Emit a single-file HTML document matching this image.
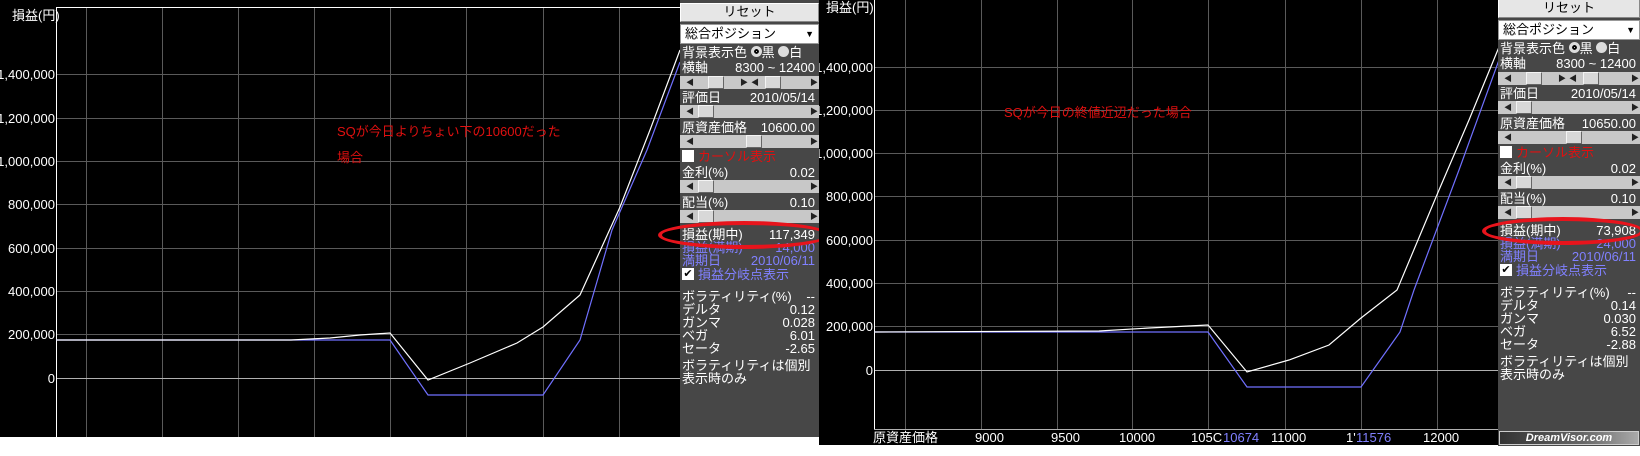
<!DOCTYPE html>
<html><head><meta charset="utf-8">
<style>
*{margin:0;padding:0;box-sizing:border-box}
body{width:1640px;height:456px;background:#fff;position:relative;overflow:hidden;font-family:"Liberation Sans","Noto Sans CJK JP",sans-serif;font-size:13px;color:#fff}
.abs{position:absolute;white-space:nowrap;line-height:13px}
.panel{position:absolute;background:#474747}
.btn{position:absolute;background:#e6e6e6;border:1px solid #fff;border-right-color:#888;border-bottom-color:#888;color:#000;text-align:center;font-size:13px;line-height:16px}
.dd{position:absolute;background:#fff;color:#000;font-size:13px;line-height:18px;padding-left:4px;border:1px solid #999}
.sb{position:absolute;height:13px;background:#c8c8c8}
.th{position:absolute;top:0;width:16px;height:13px;background:#d8d8d8;border:1px solid #f4f4f4;border-right-color:#666;border-bottom-color:#666}
.ar{position:absolute;top:2px;font-size:8px;color:#222;line-height:9px}
.row{position:absolute;left:2px;right:4px;height:13px;line-height:13px}
.row span.r{position:absolute;right:0}
.blue{color:#8080ff}
</style></head><body>

<!-- LEFT CHART -->
<svg class="abs" style="left:0;top:0" width="680" height="437">
<rect width="680" height="437" fill="#000"/>
<g stroke="#5a5a5a" stroke-width="1">
<line x1="86.5" y1="7" x2="86.5" y2="437"/><line x1="162.5" y1="7" x2="162.5" y2="437"/><line x1="238.5" y1="7" x2="238.5" y2="437"/><line x1="314.5" y1="7" x2="314.5" y2="437"/><line x1="390.5" y1="7" x2="390.5" y2="437"/><line x1="466.5" y1="7" x2="466.5" y2="437"/><line x1="543.5" y1="7" x2="543.5" y2="437"/><line x1="619.5" y1="7" x2="619.5" y2="437"/>
<line x1="56" y1="74.5" x2="680" y2="74.5"/><line x1="56" y1="118.5" x2="680" y2="118.5"/><line x1="56" y1="161.5" x2="680" y2="161.5"/><line x1="56" y1="204.5" x2="680" y2="204.5"/><line x1="56" y1="248.5" x2="680" y2="248.5"/><line x1="56" y1="291.5" x2="680" y2="291.5"/><line x1="56" y1="334.5" x2="680" y2="334.5"/>
</g>
<line x1="56" y1="378.5" x2="680" y2="378.5" stroke="#b0b0b0"/>
<line x1="56.5" y1="7" x2="56.5" y2="437" stroke="#fff"/>
<line x1="56" y1="7.5" x2="680" y2="7.5" stroke="#fff"/>
<polyline fill="none" stroke="#7070ff" stroke-width="1.2" points="56,340 390,340 428,395 543,395 580,340 612,230 647,150 680,62"/>
<polyline fill="none" stroke="#fff" stroke-width="1.2" points="56,340 291,340 330,338 360,335 390,333 428,380 470,363 517,343 543,327 580,295 620,207 650,130 680,50"/>
<g fill="#fff" font-size="13" font-family="Liberation Sans, Noto Sans CJK JP, sans-serif" text-anchor="end">
<text x="55" y="79">1,400,000</text><text x="55" y="123">1,200,000</text><text x="55" y="166">1,000,000</text><text x="55" y="209">800,000</text><text x="55" y="253">600,000</text><text x="55" y="296">400,000</text><text x="55" y="339">200,000</text><text x="55" y="383">0</text>
</g>
<text x="12" y="20" fill="#fff" font-size="13" font-family="Liberation Sans, Noto Sans CJK JP, sans-serif">損益(円)</text>
<g fill="#e01010" font-size="13" font-family="Liberation Sans, Noto Sans CJK JP, sans-serif">
<text x="337" y="136">SQが今日よりちょい下の10600だった</text><text x="337" y="162">場合</text>
</g>
</svg>

<!-- LEFT PANEL -->
<div class="panel" id="p1" style="left:680px;top:0;width:139px;height:437px"></div>

<!-- RIGHT CHART -->
<svg class="abs" style="left:819px;top:0" width="680" height="445">
<rect width="680" height="445" fill="#000"/>
<g stroke="#5a5a5a">
<line x1="86.5" y1="0" x2="86.5" y2="429"/><line x1="162.5" y1="0" x2="162.5" y2="429"/><line x1="238.5" y1="0" x2="238.5" y2="429"/><line x1="313.5" y1="0" x2="313.5" y2="429"/><line x1="389.5" y1="0" x2="389.5" y2="429"/><line x1="466.5" y1="0" x2="466.5" y2="429"/><line x1="542.5" y1="0" x2="542.5" y2="429"/><line x1="618.5" y1="0" x2="618.5" y2="429"/>
<line x1="55" y1="67.5" x2="680" y2="67.5"/><line x1="55" y1="110.5" x2="680" y2="110.5"/><line x1="55" y1="153.5" x2="680" y2="153.5"/><line x1="55" y1="196.5" x2="680" y2="196.5"/><line x1="55" y1="240.5" x2="680" y2="240.5"/><line x1="55" y1="283.5" x2="680" y2="283.5"/><line x1="55" y1="326.5" x2="680" y2="326.5"/>
</g>
<line x1="55" y1="370.5" x2="680" y2="370.5" stroke="#b0b0b0"/>
<line x1="55.5" y1="0" x2="55.5" y2="429" stroke="#fff"/>
<line x1="55" y1="429.5" x2="680" y2="429.5" stroke="#b0b0b0"/>
<polyline fill="none" stroke="#7070ff" stroke-width="1.2" points="55,332 389,332 428,387 542,387 581,332 595,290 640,170 680,60"/>
<polyline fill="none" stroke="#fff" stroke-width="1.2" points="55,332 280,331 330,328 389,325 428,372 470,360 510,345 542,318 578,290 620,190 650,120 680,47"/>
<g fill="#fff" font-size="13" font-family="Liberation Sans, Noto Sans CJK JP, sans-serif" text-anchor="end">
<text x="54" y="72">1,400,000</text><text x="54" y="115">1,200,000</text><text x="54" y="158">1,000,000</text><text x="54" y="201">800,000</text><text x="54" y="245">600,000</text><text x="54" y="288">400,000</text><text x="54" y="331">200,000</text><text x="54" y="375">0</text>
</g>
<text x="-6" y="12" fill="#fff" font-size="13" font-family="Liberation Sans, Noto Sans CJK JP, sans-serif">　損益(円)</text>
<text x="185" y="117" fill="#e01010" font-size="13" font-family="Liberation Sans, Noto Sans CJK JP, sans-serif">SQが今日の終値近辺だった場合</text>
<g fill="#fff" font-size="13" font-family="Liberation Sans, Noto Sans CJK JP, sans-serif">
<text x="54" y="442">原資産価格</text><text x="156" y="442">9000</text><text x="232" y="442">9500</text><text x="300" y="442">10000</text><text x="372" y="442">105C</text><text x="404" y="442" fill="#8080ff">10674</text><text x="452" y="442">11000</text><text x="527" y="442">1'</text><text x="537" y="442" fill="#8080ff">11576</text><text x="604" y="442">12000</text>
</g>
</svg>

<!-- RIGHT PANEL -->
<div class="panel" id="p2" style="left:1498px;top:0;width:142px;height:446px"></div>

<script>
function sb(top,w,thumbs,arrows){
  var h='<div class="sb" style="left:0;top:'+top+'px;width:'+w+'px">';
  thumbs.forEach(function(t){h+='<div class="th" style="left:'+t+'px"></div>'});
  arrows.forEach(function(a){h+='<div class="ar" style="left:'+a[0]+'px">'+a[1]+'</div>'});
  return h+'</div>';
}
function build(id,o,d){
  var w=d.w,h='';
  h+='<div class="btn" style="left:0;top:'+(o+3)+'px;width:'+w+'px;height:19px">リセット</div>';
  h+='<div class="dd" style="left:0;top:'+(o+24)+'px;width:'+w+'px;height:20px">総合ポジション<span style="position:absolute;right:4px;font-size:9px">▼</span></div>';
  var R=function(t,l,r,c){h+='<div class="row'+(c?' '+c:'')+'" style="top:'+(o+t)+'px">'+l+'<span class="r">'+r+'</span></div>'};
  R(46,'背景表示色 <span style="display:inline-block;width:11px;height:11px;border-radius:50%;background:#fff;border:3px solid #ddd;box-shadow:inset 0 0 0 2px #000"></span>黒 <span style="display:inline-block;width:11px;height:11px;border-radius:50%;background:#ddd"></span>白','');
  R(61,'横軸','8300 ~ 12400');
  h+=sb(o+76,w,[28,85],[[6,'◀'],[60,'▶'],[71,'◀'],[w-9,'▶']]);
  R(91,'評価日','2010/05/14');
  h+=sb(o+105,w,[18],[[6,'◀'],[w-9,'▶']]);
  R(121,'原資産価格',d.price);
  h+=sb(o+135,w,[d.pt],[[6,'◀'],[w-9,'▶']]);
  h+='<div style="position:absolute;left:2px;top:'+(o+150)+'px;width:12px;height:12px;background:#fff"></div><div class="row" style="top:'+(o+150)+'px;left:18px;color:#e01010">カーソル表示</div>';
  R(166,'金利(%)','0.02');
  h+=sb(o+180,w,[18],[[6,'◀'],[w-9,'▶']]);
  R(196,'配当(%)','0.10');
  h+=sb(o+210,w,[18],[[6,'◀'],[w-9,'▶']]);
  R(228,'損益(期中)',d.pl);
  R(241,'損益(満期)',d.mat,'blue');
  R(254,'満期日','2010/06/11','blue');
  h+='<div style="position:absolute;left:2px;top:'+(o+268)+'px;width:12px;height:12px;background:#fff;color:#000;font-size:11px;line-height:12px;text-align:center">✔</div><div class="row blue" style="top:'+(o+268)+'px;left:18px">損益分岐点表示</div>';
  R(290,'ボラティリティ(%)','--');
  R(303,'デルタ',d.dl);R(316,'ガンマ',d.gm);R(329,'ベガ',d.vg);R(342,'セータ',d.th);
  h+='<div class="row" style="top:'+(o+359)+'px;overflow:hidden;right:0">ボラティリティは個別銘柄</div>';
  h+='<div class="row" style="top:'+(o+372)+'px">表示時のみ</div>';
  if(d.logo) h+='<div style="position:absolute;left:1px;top:431px;width:'+(w-2)+'px;height:14px;background:linear-gradient(90deg,#333,#666 60%,#aaa);border:1px solid #ccc;color:#fff;font-style:italic;font-weight:bold;font-size:11px;line-height:12px;text-align:center">DreamVisor.com</div>';
  h+='<div style="position:absolute;left:'+d.el+'px;top:'+(o+221)+'px;width:'+d.ew+'px;height:28px;border:4px solid #e8141c;border-radius:50%"></div>';
  document.getElementById(id).innerHTML=h;
}
build('p1',0,{w:139,price:'10600.00',pt:66,pl:'117,349',mat:'14,000',dl:'0.12',gm:'0.028',vg:'6.01',th:'-2.65',el:-22,ew:172});
build('p2',-4,{w:142,price:'10650.00',pt:68,pl:'73,908',mat:'24,000',dl:'0.14',gm:'0.030',vg:'6.52',th:'-2.88',logo:1,el:-16,ew:162});
</script>
</body></html>
